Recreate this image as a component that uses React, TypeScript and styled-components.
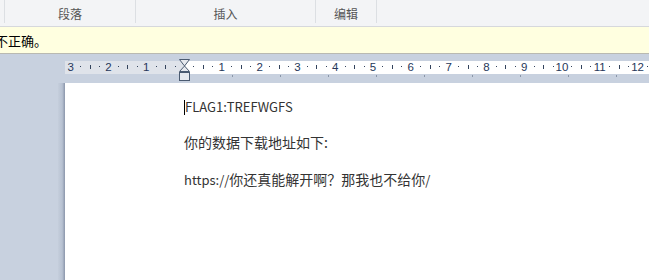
import React from "react";
import styled, { createGlobalStyle } from "styled-components";

const GlobalStyle = createGlobalStyle`
  html, body {
    margin: 0;
    padding: 0;
    overflow: hidden;
    background: #c8d1df;
  }
  body {
    font-family: "Noto Sans CJK SC", "Noto Sans", sans-serif;
  }
`;

const Screen = styled.div`
  width: 649px;
  height: 280px;
  display: flex;
  flex-direction: column;
  overflow: hidden;
`;

const RibbonBar = styled.div`
  height: 26px;
  display: flex;
  padding-left: 4px;
  background: #f3f4f6;
  border-bottom: 1px solid #d6d8dc;
`;

const RibbonGroup = styled.div<{ $width: number; $last?: boolean }>`
  width: ${(p) => p.$width}px;
  height: 23px;
  display: flex;
  align-items: flex-end;
  justify-content: center;
  border-left: 1px solid #dcdfe3;
  border-right: ${(p) => (p.$last ? "1px solid #dcdfe3" : "none")};
  font-size: 12px;
  line-height: 19px;
  color: #555;
`;

const NoticeBar = styled.div`
  height: 26px;
  display: flex;
  align-items: center;
  background: #ffffe0;
  border-bottom: 1px solid #b9b9b1;
  font-size: 13px;
  color: #000;
`;

const NoticeText = styled.span`
  margin-left: -5px;
`;

const Workspace = styled.div`
  flex: 1;
  display: flex;
  flex-direction: column;
  background: #c8d1df;
`;

const RulerStrip = styled.div`
  height: 29px;
  padding-left: 65px;
  flex-shrink: 0;
`;

const PageRow = styled.div`
  flex: 1;
  display: flex;
  padding-left: 58px;
`;

const PageShadow = styled.div`
  width: 7px;
  background: linear-gradient(to right, #c5cedc, #b7c1d1 60%, #8b96ab);
`;

const Page = styled.div`
  flex: 1;
  background: #fff;
  padding: 13px 0 0 119px;
  font-size: 14px;
  line-height: 20px;
  color: #333;
`;

const Paragraph = styled.p<{ $after?: number }>`
  margin: 0 0 ${(p) => p.$after ?? 15}px;
  white-space: nowrap;
`;

const Latin = styled.span`
  font-size: 13px;
`;

const Caret = styled.span`
  display: inline-block;
  width: 1px;
  height: 15px;
  background: #000;
  vertical-align: -3px;
`;

const CM = 37.8;
const ZERO = 119;

function Ruler() {
  const numbers: { x: number; label: string }[] = [];
  for (let i = -3; i <= 12; i++) {
    if (i === 0) continue;
    numbers.push({ x: ZERO + i * CM, label: String(Math.abs(i)) });
  }
  const marks: React.ReactNode[] = [];
  for (let i = -4; i <= 12; i++) {
    for (let q = 1; q <= 3; q++) {
      const x = Math.round(ZERO + (i + q / 4) * CM);
      if (x < 1 || x > 583) continue;
      if (q === 2) {
        marks.push(<rect key={`${i}-${q}`} x={x} y={11} width={1} height={4} fill="#33435c" />);
      } else {
        marks.push(<rect key={`${i}-${q}`} x={x} y={12} width={1} height={1} fill="#33435c" />);
      }
    }
  }
  const tabs: number[] = [];
  for (let x = 167; x < 584; x += 48) tabs.push(x);

  return (
    <svg width={584} height={29} style={{ display: "block" }}>
      <rect x={0} y={7} width={118} height={13} fill="#dfe3ea" />
      <rect x={118} y={7} width={466} height={13} fill="#ffffff" />
      {marks}
      {numbers.map((n) => (
        <text
          key={n.x}
          x={n.x}
          y={17}
          textAnchor="middle"
          fontSize={11.5}
          fontFamily="'Liberation Sans', Arial, sans-serif"
          fill="#26375a"
        >
          {n.label}
        </text>
      ))}
      {tabs.map((x) => (
        <rect key={x} x={x} y={21} width={1} height={2} fill="#8a96a8" />
      ))}
      <path d="M114.5 5.5 H124.5 L119.5 12 Z" fill="#e6e9ee" stroke="#4a5a70" />
      <path d="M119.5 12 L114.5 17.5 H124.5 Z" fill="#e6e9ee" stroke="#4a5a70" />
      <rect x={114.5} y={18.5} width={10} height={8} fill="#e6e9ee" stroke="#4a5a70" />
    </svg>
  );
}

export default function App() {
  return (
    <Screen>
      <GlobalStyle />
      <RibbonBar>
        <RibbonGroup $width={130}>段落</RibbonGroup>
        <RibbonGroup $width={179}>插入</RibbonGroup>
        <RibbonGroup $width={60} $last>
          编辑
        </RibbonGroup>
      </RibbonBar>
      <NoticeBar>
        <NoticeText>不正确。</NoticeText>
      </NoticeBar>
      <Workspace>
        <RulerStrip>
          <Ruler />
        </RulerStrip>
        <PageRow>
          <PageShadow />
          <Page>
            <Paragraph>
              <Caret />
              <Latin>FLAG1:TREFWGFS</Latin>
            </Paragraph>
            <Paragraph $after={17}>你的数据下载地址如下:</Paragraph>
            <Paragraph>
              <Latin>https://</Latin>你还真能解开啊？那我也不给你<Latin>/</Latin>
            </Paragraph>
          </Page>
        </PageRow>
      </Workspace>
    </Screen>
  );
}
